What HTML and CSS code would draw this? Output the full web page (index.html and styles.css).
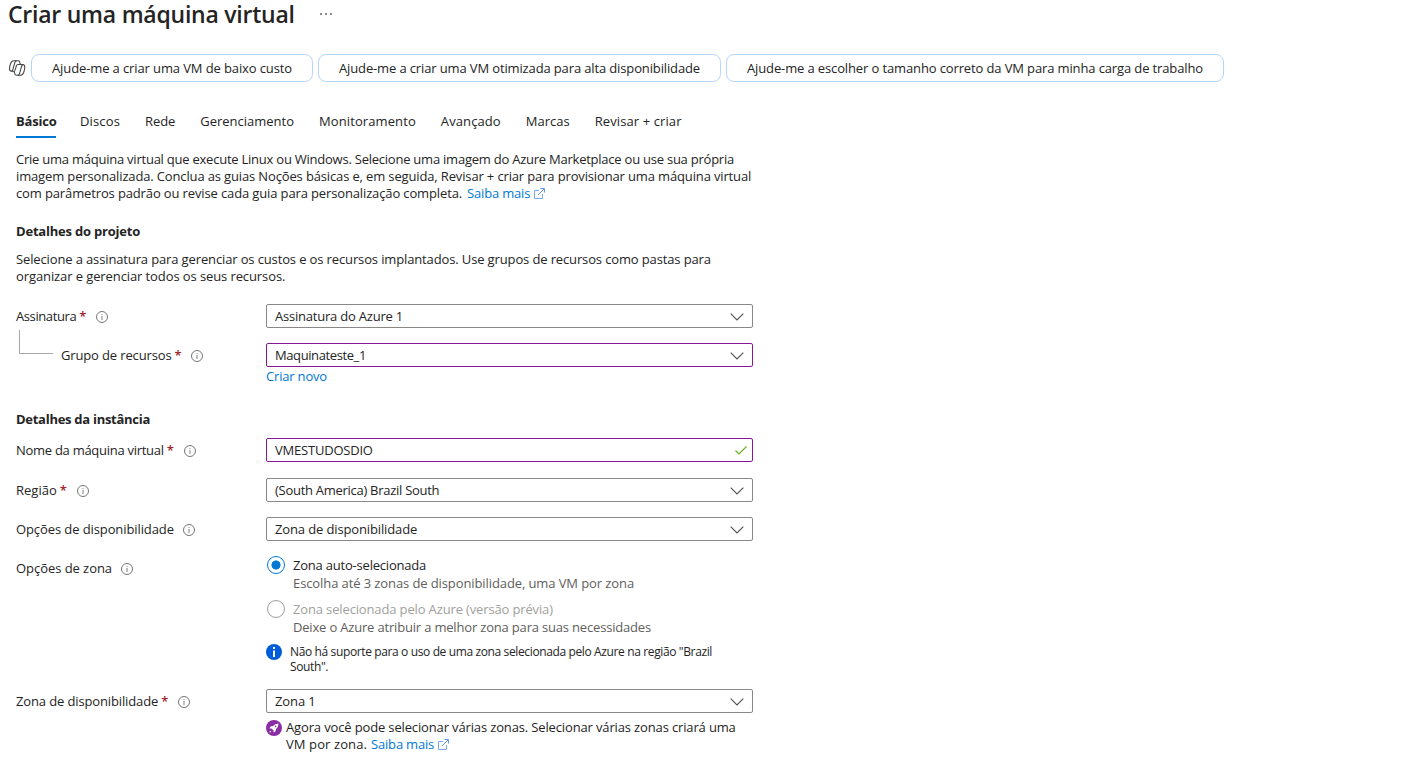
FILE: index.html
```html
<!DOCTYPE html>
<html lang="pt-BR">
<head>
<meta charset="utf-8">
<title>Criar uma máquina virtual</title>
<link rel="stylesheet" href="styles.css">
</head>
<body>
<svg class="defs" width="0" height="0" aria-hidden="true">
  <symbol id="info" viewBox="0 0 12 12"><circle cx="6" cy="6" r="5.5" fill="none" stroke="#757575"/><path d="M6 5v4" stroke="#8a8a8a" stroke-width="1.1"/><path d="M5.5 3h1v1h-1z" fill="#8a8a8a"/></symbol>
  <symbol id="chevron" viewBox="0 0 14 8"><path d="M.7.7 7 7 13.3.7" fill="none" stroke="#505050" stroke-width="1.1"/></symbol>
  <symbol id="external" viewBox="0 0 11 11"><path d="M5 2.5H.5v8h8V6" fill="none" stroke="#7ba7ee"/><path d="M4 7 10 1M6.5.5h4v4" fill="none" stroke="#5f97e8"/></symbol>
</svg>
<header class="title-bar"><h1>Criar uma máquina virtual</h1><span class="more"><i></i><i></i><i></i></span></header>
<div class="prompts">
  <svg class="copilot" viewBox="0 0 18 16"><g fill="none" stroke="#484848" stroke-width="1.1" stroke-linejoin="round" stroke-linecap="round"><path d="M6.500 11.300H3.600Q1.500 11.300 1.500 8.800q0-1.700.8-4.500Q3.300.8 5.700.8h4.600q1 0 1.300 1l.8 2.600"/><path d="M12 4.500h2.600q2.200 0 2.200 2.500 0 1.700-.8 4.500-1 3.700-3.400 3.700H8.200q-1 0-1.300-1l-.9-2.900"/><path d="M8.200.9Q7.200 1.300 6.800 2.700L5 9.200q-.5 2-1.800 2.100M10.200 15.100q1-.3 1.400-1.800l1.800-6.500q.5-2 1.700-2.200M12 4.500h-2q-1.200 0-1.600 1.300L7 10.300"/></g></svg>
  <button class="prompt low-cost"><span>Ajude-me a criar uma VM de baixo custo</span></button>
  <button class="prompt high-availability"><span>Ajude-me a criar uma VM otimizada para alta disponibilidade</span></button>
  <button class="prompt right-size"><span>Ajude-me a escolher o tamanho correto da VM para minha carga de trabalho</span></button>
</div>
<nav class="tabs">
  <a class="tab active">Básico</a><a class="tab t-looser">Discos</a><a class="tab t-slight">Rede</a><a class="tab">Gerenciamento</a><a class="tab t-loose">Monitoramento</a><a class="tab t-loose">Avançado</a><a class="tab">Marcas</a><a class="tab t-loose">Revisar + criar</a>
</nav>
<main>
  <p class="intro"><span class="t-tighter">Crie uma máquina virtual que execute Linux ou Windows. Selecione uma imagem do Azure Marketplace ou use sua própria</span><br><span class="t-medium">imagem personalizada. Conclua as guias Noções básicas e, em seguida, Revisar + criar para provisionar uma máquina virtual</span><br><span class="t-snug">com parâmetros padrão ou revise cada guia para personalização completa.</span><a class="link">Saiba mais<svg class="ext"><use href="#external"/></svg></a></p>
  <h2 class="project-title">Detalhes do projeto</h2>
  <p class="project-text"><span class="t-snug">Selecione a assinatura para gerenciar os custos e os recursos implantados. Use grupos de recursos como pastas para</span><br><span class="t-slight">organizar e gerenciar todos os seus recursos.</span></p>
  <div class="row subscription"><div class="label"><span class="t-condensed">Assinatura</span><b>*</b><svg><use href="#info"/></svg></div><div class="field"><span class="t-tight">Assinatura do Azure 1</span><svg><use href="#chevron"/></svg></div></div>
  <div class="row group"><div class="label nested"><span class="t-medium">Grupo de recursos</span><b>*</b><svg><use href="#info"/></svg></div><div class="field edited"><span class="t-condensed">Maquinateste_1</span><svg><use href="#chevron"/></svg></div></div>
  <a class="link new">Criar novo</a>
  <h2 class="instance-title">Detalhes da instância</h2>
  <div class="row name"><div class="label"><span class="t-narrow">Nome da máquina virtual</span><b>*</b><svg><use href="#info"/></svg></div><div class="field edited"><span class="t-tight">VMESTUDOSDIO</span><svg class="check" viewBox="0 0 12 9"><path d="M.5 4.5 4 8l7.500-7.500" fill="none" stroke="#6bb022" stroke-width="1.2"/></svg></div></div>
  <div class="row region"><div class="label"><span>Região</span><b>*</b><svg><use href="#info"/></svg></div><div class="field"><span class="t-narrow">(South America) Brazil South</span><svg><use href="#chevron"/></svg></div></div>
  <div class="row availability"><div class="label"><span class="t-slight">Opções de disponibilidade</span><svg><use href="#info"/></svg></div><div class="field"><span class="t-snug">Zona de disponibilidade</span><svg><use href="#chevron"/></svg></div></div>
  <div class="row zone-options"><div class="label"><span class="t-hair">Opções de zona</span><svg><use href="#info"/></svg></div>
    <div class="options">
      <div class="option"><i class="radio on"></i><div><div class="t-tight">Zona auto-selecionada</div><div class="hint t-slight">Escolha até 3 zonas de disponibilidade, uma VM por zona</div></div></div>
      <div class="option"><i class="radio"></i><div><div class="disabled t-medium">Zona selecionada pelo Azure (versão prévia)</div><div class="hint t-close">Deixe o Azure atribuir a melhor zona para suas necessidades</div></div></div>
      <div class="notice"><svg viewBox="0 0 16 16"><circle cx="8" cy="8" r="8" fill="#015cda"/><path d="M7 6.5h2V13H7zM7 3h2v2H7z" fill="#fff"/></svg><p>Não há suporte para o uso de uma zona selecionada pelo Azure na região "Brazil<br>South".</p></div>
    </div>
  </div>
  <div class="row zone"><div class="label"><span class="t-snug">Zona de disponibilidade</span><b>*</b><svg><use href="#info"/></svg></div><div class="field"><span class="t-slight">Zona 1</span><svg><use href="#chevron"/></svg></div></div>
  <div class="tip"><svg class="rocket" viewBox="0 0 16 16"><circle cx="8" cy="8" r="8" fill="#8a2da5"/><path d="M12.500 3.500Q9 3.500 7 6L4.500 6.500 3.500 8.500 5.500 8.400 7.600 10.500 7.500 12.500 9.500 11.500 10 9Q12.500 7 12.500 3.500ZM4 10.500 5.500 12 3.500 12.500Z" fill="#fff"/><circle cx="9.6" cy="6.4" r=".8" fill="#8a2da5"/></svg><p><span class="t-medium">Agora você pode selecionar várias zonas. Selecionar várias zonas criará uma</span><br><span class="t-loose">VM por zona.</span><a class="link">Saiba mais<svg class="ext"><use href="#external"/></svg></a></p></div>
</main>
</body>
</html>
```
FILE: styles.css
```css
* { box-sizing: border-box; }
body { margin: 0; height: 773px; overflow: hidden; background: #fff; color: #242424; font: 13px/17px "Open Sans", "Noto Sans", sans-serif; white-space: nowrap; }
h1, h2, p { margin: 0; }
.defs { display: block; height: 0; }

/* Letter spacing steps */
.t-looser { letter-spacing: .14px; }
.t-loose { letter-spacing: .1px; }
.t-hair { letter-spacing: -.05px; }
.t-slight { letter-spacing: -.098px; }
.t-snug { letter-spacing: -.131px; }
.t-medium { letter-spacing: -.142px; }
.t-close { letter-spacing: -.181px; }
.t-tight { letter-spacing: -.21px; }
.t-tighter { letter-spacing: -.235px; }
.t-narrow { letter-spacing: -.278px; }
.t-condensed { letter-spacing: -.4px; }

/* Header */
.title-bar { display: flex; height: 28px; padding-left: 8px; }
h1 { font-size: 23px; line-height: 29px; font-weight: 600; letter-spacing: -.24px; width: 312px; }
.more { display: flex; gap: 3px; padding-top: 13px; }
.more i { width: 2px; height: 2px; background: #8a8a8a; }
.prompts { display: flex; gap: 5px; align-items: center; height: 28px; margin-top: 26px; padding-left: 8px; }
.copilot { width: 18px; height: 16px; }
.prompt { height: 28px; padding: 0; background: #fff; border: 1px solid #b4d6fa; border-radius: 8px; font: inherit; color: inherit; }
.low-cost { width: 282px; letter-spacing: -.114px; }
.high-availability { width: 403px; letter-spacing: -.133px; }
.right-size { width: 498px; letter-spacing: -.126px; }

/* Tabs */
.tabs { display: flex; gap: 25px; height: 56px; padding: 28px 0 0 16px; }
.tab { height: 28px; padding-top: 3px; border-bottom: 2px solid transparent; }
.active { font-weight: 700; letter-spacing: -.2px; border-color: #0078d4; width: 40px; margin-right: -1px; }

/* Form */
main { padding-left: 16px; }
.intro { margin-top: 13px; }
.link { color: #0078d4; letter-spacing: -.18px; }
.intro .link { margin-left: 5px; }
.tip .link { margin-left: 4px; }
.ext { width: 11px; height: 11px; margin-left: 4px; vertical-align: -1px; }
h2 { font-size: 13px; line-height: 17px; font-weight: 700; }
.project-title { margin-top: 21px; letter-spacing: -.21px; }
.project-text { margin-top: 11px; }
.row { display: grid; grid-template-columns: 250px 487px; }
.label { display: flex; align-items: center; height: 24px; }
.label b { color: #a4262c; font-weight: 600; margin-left: 3px; width: 8px; }
.label svg { width: 12px; height: 12px; margin-left: 9px; margin-top: 1px; }
.field { display: flex; align-items: center; justify-content: space-between; height: 24px; padding: 0 8px; border: 1px solid #8a8886; border-radius: 2px; }
.field svg { width: 14px; height: 8px; margin-top: 1px; }
.field .check { width: 12px; height: 9px; margin: 0 -3px 0 0; }
.edited { border-color: #881798; }
.subscription { margin-top: 19px; }
.group { margin-top: 15px; }
.nested { padding-left: 45px; position: relative; }
.nested::before { content: ""; position: absolute; left: 3px; top: -13px; width: 33px; height: 23px; border: solid #a6a6a6; border-width: 0 0 1px 1px; }
.new { display: block; margin: 1px 0 0 250px; }
.instance-title { margin-top: 26px; letter-spacing: -.277px; }
.name { margin-top: 10px; }
.region { margin-top: 16px; }
.availability { margin-top: 15px; }
.zone-options { margin-top: 15px; }
.options { display: flex; flex-direction: column; }
.option { display: flex; gap: 8px; height: 44px; line-height: 18px; }
.radio { flex: none; width: 18px; height: 18px; margin-left: 1px; border: 1px solid #a19f9d; border-radius: 50%; }
.radio.on { border-color: #0078d4; background: radial-gradient(circle, #0078d4 4.2px, transparent 4.9px); }
.hint { color: #605e5c; }
.disabled { color: #a19f9d; }
.notice { display: flex; gap: 8px; font-size: 12px; line-height: 15px; letter-spacing: -.372px; }
.notice svg, .rocket { width: 16px; height: 16px; flex: none; }
.zone { margin-top: 15px; }
.tip { display: flex; gap: 4px; margin: 6px 0 0 250px; }
.rocket { margin-top: 1px; }
```
